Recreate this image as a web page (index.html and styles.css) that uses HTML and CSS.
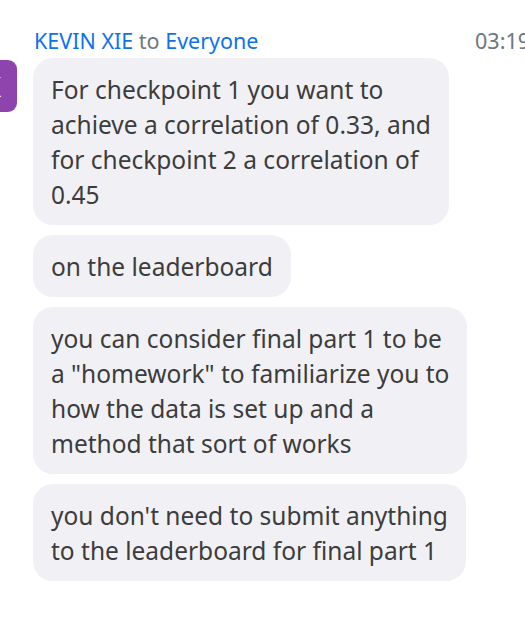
FILE: index.html
```html
<!DOCTYPE html>
<html>
<head>
<meta charset="utf-8">
<link rel="stylesheet" href="styles.css">
</head>
<body>
<div class="chat">
  <div class="header">
    <span class="sender"><span class="name">KEVIN XIE</span> <span class="to">to</span> <span class="name">Everyone</span></span>
    <span class="time">03:19</span>
  </div>
  <div class="row">
    <div class="avatar">K</div>
    <div class="messages">
      <div class="bubble">For checkpoint 1 you want to<br>achieve a correlation of 0.33, and<br>for checkpoint 2 a correlation of<br>0.45</div>
      <div class="bubble">on the leaderboard</div>
      <div class="bubble">you can consider final part 1 to be<br>a "homework" to familiarize you to<br>how the data is set up and a<br>method that sort of works</div>
      <div class="bubble">you don't need to submit anything<br>to the leaderboard for final part 1</div>
    </div>
  </div>
</div>
</body>
</html>
```
FILE: styles.css
```css
html, body {
  margin: 0;
  padding: 0;
  background: #ffffff;
  overflow: hidden;
}
body {
  width: 525px;
  height: 641px;
  font-family: "Noto Sans", "Open Sans", sans-serif;
}
.chat {
  padding-top: 27px;
  width: 540px;
}
.header {
  display: flex;
  justify-content: space-between;
  align-items: baseline;
  margin-left: 34px;
  width: 496px;
  font-size: 21.5px;
  line-height: 28px;
  white-space: nowrap;
}
.name {
  color: #0e72ed;
}
.to {
  color: #6e7680;
}
.time {
  color: #6e7680;
}
.row {
  display: flex;
  align-items: flex-start;
  gap: 16px;
  margin-top: 3px;
}
.avatar {
  flex: none;
  box-sizing: border-box;
  width: 52px;
  height: 52px;
  margin-left: -35px;
  margin-top: 2px;
  padding-left: 3px;
  border-radius: 9px;
  background: #8e44ad;
  color: #ffffff;
  font-size: 28px;
  display: flex;
  align-items: center;
  justify-content: center;
}
.messages {
  display: flex;
  flex-direction: column;
  align-items: flex-start;
  gap: 10px;
}
.bubble {
  background: #f1f1f5;
  border-radius: 20px;
  padding: 14px 18px 13px;
  font-size: 24.5px;
  line-height: 35px;
  color: #3c3c3c;
  white-space: nowrap;
}
```
